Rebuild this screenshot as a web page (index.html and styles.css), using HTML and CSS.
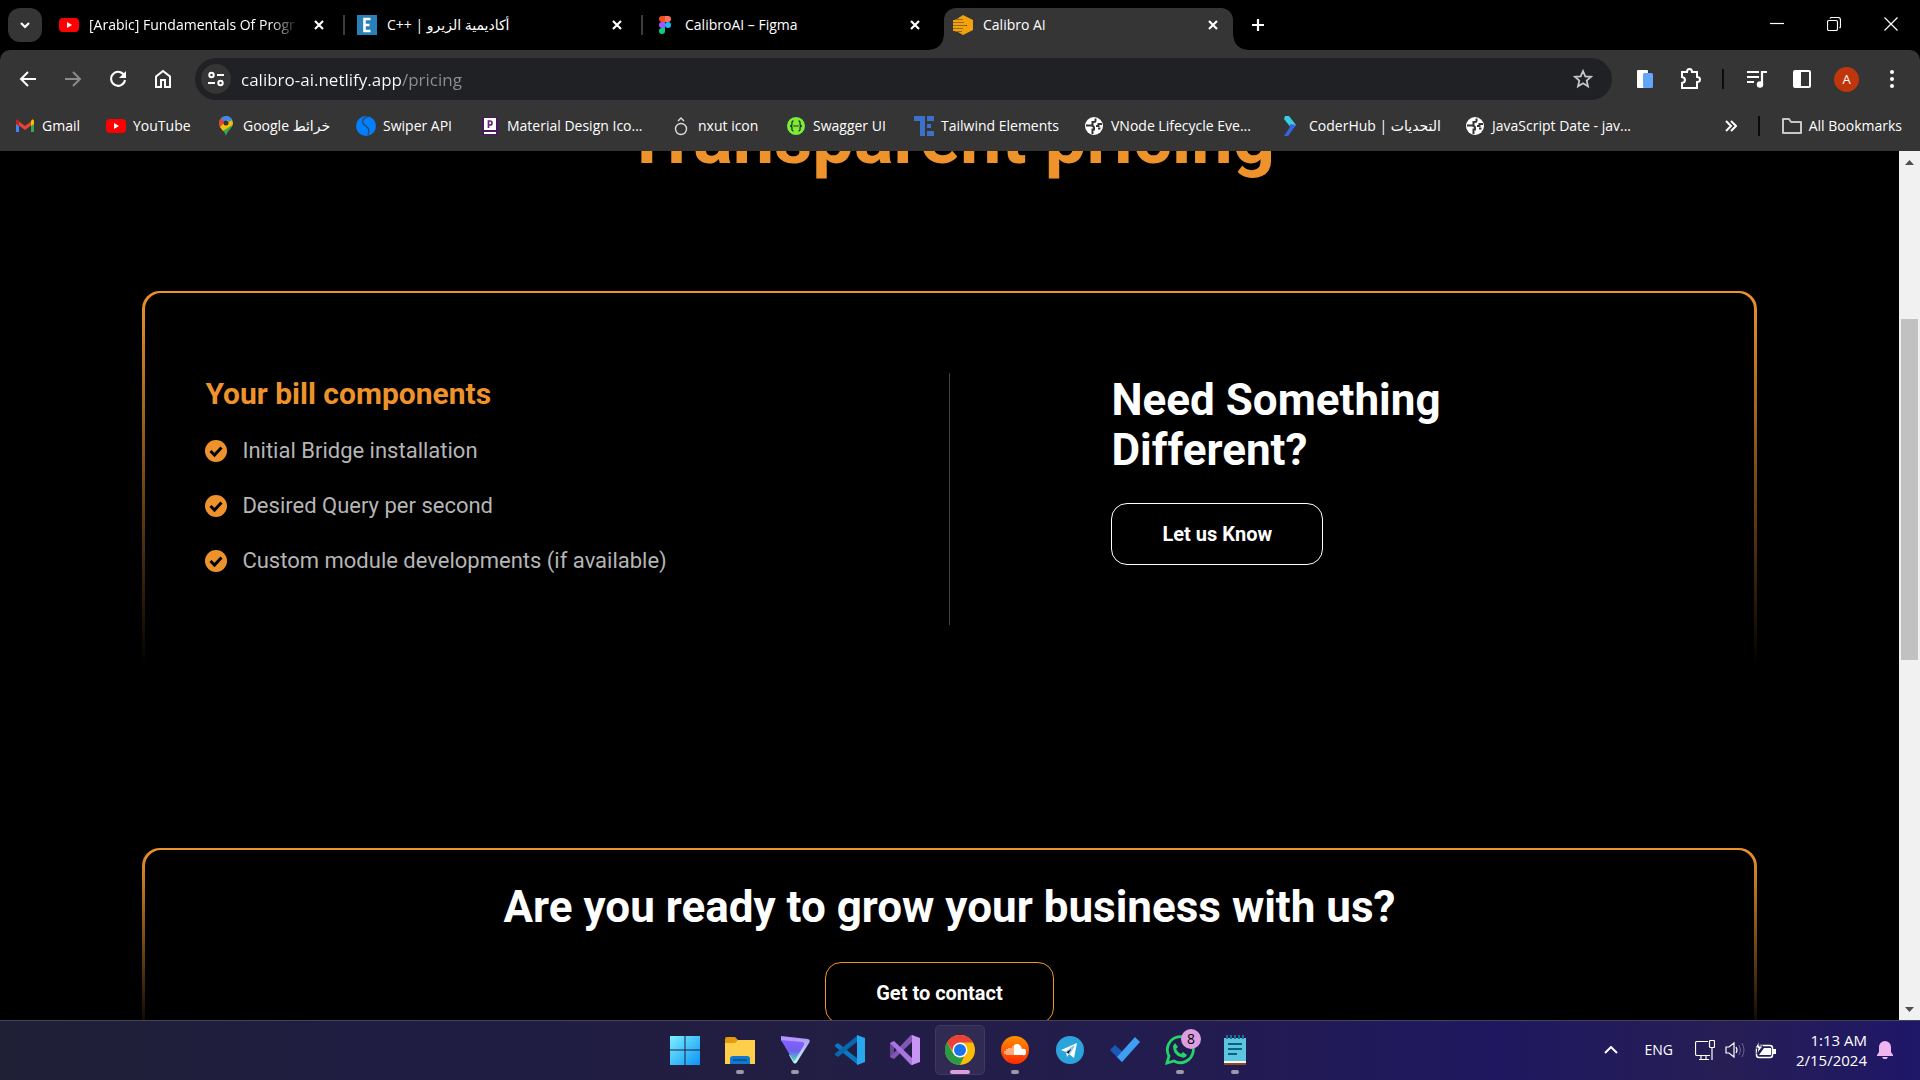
FILE: index.html
```html
<!DOCTYPE html>
<html lang="en">
<head>
<meta charset="utf-8">
<title>Calibro AI</title>
<link rel="stylesheet" href="styles.css">
</head>
<body>
<header class="browser">
  <nav class="tabstrip" aria-label="Tabs">
    <button class="tab-search" aria-label="Search tabs"><svg width="12" height="12" viewBox="0 0 12 12"><path class="line bold" d="M2 4l4 4 4-4"/></svg></button>
    <div class="tab">
      <svg class="favicon" viewBox="0 0 20 20"><rect y="3" width="20" height="14" rx="4" fill="#f00"/><path d="M8 7l5 3-5 3z" fill="#fff"/></svg>
      <span class="tab-title fade">[Arabic] Fundamentals Of Progr</span>
      <button class="tab-close" aria-label="Close tab"><svg width="10" height="10" viewBox="0 0 10 10"><path class="line bold" d="M1 1l8 8M9 1l-8 8"/></svg></button>
    </div>
    <div class="tab divided">
      <svg class="favicon" viewBox="0 0 20 20"><path fill="#2980b9" d="M0 0h20v20H0z"/><path d="M13.500 4H7.500v12h6M7.500 10h5" fill="none" stroke="#fff" stroke-width="2.600"/></svg>
      <span class="tab-title">C++ | أكاديمية الزيرو</span>
      <button class="tab-close" aria-label="Close tab"><svg width="10" height="10" viewBox="0 0 10 10"><path class="line bold" d="M1 1l8 8M9 1l-8 8"/></svg></button>
    </div>
    <div class="tab divided">
      <svg class="favicon" viewBox="0 0 20 20"><path fill="#f24e1e" d="M10 1v6H7a3 3 0 010-6z"/><path fill="#ff7262" d="M10 1h3a3 3 0 010 6h-3z"/><path fill="#a259ff" d="M10 7v6H7a3 3 0 010-6z"/><circle cx="13" cy="10" r="3" fill="#1abcfe"/><path fill="#0acf83" d="M7 13h3v3a3 3 0 11-3-3z"/></svg>
      <span class="tab-title">CalibroAI – Figma</span>
      <button class="tab-close" aria-label="Close tab"><svg width="10" height="10" viewBox="0 0 10 10"><path class="line bold" d="M1 1l8 8M9 1l-8 8"/></svg></button>
    </div>
    <div class="tab active">
      <svg class="favicon" viewBox="0 0 20 20"><path fill="#f2a20c" d="M10 0l10 5v10l-10 5-5-3h4v-1H0v-2h10v-1H0v-2h14v-1H0V8h9V7H0V5h8V4H4z"/><path d="M2 4.500h8M0 7.500h11M0 10.500h13M0 13.500h10M2 16.500h7" stroke="#9a6b14" stroke-width="1"/></svg>
      <span class="tab-title">Calibro AI</span>
      <button class="tab-close" aria-label="Close tab"><svg width="10" height="10" viewBox="0 0 10 10"><path class="line bold" d="M1 1l8 8M9 1l-8 8"/></svg></button>
    </div>
    <button class="new-tab" aria-label="New tab"><svg width="14" height="14" viewBox="0 0 14 14"><path class="line bold" d="M7 1v12M1 7h12"/></svg></button>
    <div class="window-controls">
      <button aria-label="Minimize"><svg width="14" height="14" viewBox="0 0 14 14"><path class="line thin" d="M0 6.500h14"/></svg></button>
      <button aria-label="Restore"><svg width="14" height="14" viewBox="0 0 14 14"><rect class="line thin" x=".5" y="3.500" width="10" height="10" rx="1.500"/><path class="line thin" d="M3 1.500Q3.500.5 4.500.5H11Q13.500.5 13.500 3v6.500q0 1-1 1.500"/></svg></button>
      <button aria-label="Close"><svg width="14" height="14" viewBox="0 0 14 14"><path class="line thin" d="M.5.5l13 13M13.500.5l-13 13"/></svg></button>
    </div>
  </nav>
  <div class="toolbar">
    <button class="tool" aria-label="Back"><svg width="18" height="18" viewBox="0 0 18 18"><path class="line" d="M17 9H2M9 2L2 9l7 7"/></svg></button>
    <button class="tool dim" aria-label="Forward"><svg width="18" height="18" viewBox="0 0 18 18"><path class="line" d="M1 9h15M9 2l7 7-7 7"/></svg></button>
    <button class="tool" aria-label="Reload"><svg width="18" height="18" viewBox="0 0 18 18"><path class="line" d="M15.500 6A7 7 0 1016 10"/><path d="M17 1v7h-7z" fill="#fff"/></svg></button>
    <button class="tool" aria-label="Home"><svg width="18" height="20" viewBox="0 0 18 20"><path class="line" d="M2 7.500L9 2l7 5.500V18h-5v-7H7v7H2z"/></svg></button>
    <div class="omnibox">
      <button class="site-info" aria-label="Site information"><svg width="18" height="16" viewBox="0 0 18 16"><circle class="line" cx="4.500" cy="4" r="2.200"/><path class="line" d="M10 4h7M1 12h7"/><circle class="line" cx="13.500" cy="12" r="2.200"/></svg></button>
      <input class="address" type="text" aria-label="Address" value="calibro-ai.netlify.app/pricing">
      <button class="star" aria-label="Bookmark this page"><svg width="20" height="20" viewBox="0 0 20 20"><path d="M10 2l2.300 5.300 5.700.5-4.300 3.800 1.300 5.700L10 14.300l-5 3 1.300-5.700L2 7.800l5.700-.5z" fill="none" stroke="#c7c7c7" stroke-width="1.800"/></svg></button>
    </div>
    <button class="tool" aria-label="Phone link"><svg width="20" height="20" viewBox="0 0 20 20"><rect x="2" y="1" width="11" height="18" rx="1" fill="#fff"/><rect x="8" y="4" width="10" height="15" rx="1.500" fill="#62a5fb"/></svg></button>
    <button class="tool" aria-label="Extensions"><svg width="24" height="24" viewBox="0 0 24 24"><path class="line" d="M4 5h5q0-3 2.500-3T14 5h5v5q3 0 3 2.500T19 15v6H4v-5q3-.5 3-3t-3-3z"/></svg></button>
    <span class="rule"></span>
    <button class="tool" aria-label="Media"><svg width="22" height="20" viewBox="0 0 22 20"><path class="line bold" d="M1 3h12M1 8h12M1 13h7M16 16V3h5"/><circle cx="14" cy="15.500" r="3.200" fill="#fff"/></svg></button>
    <button class="tool" aria-label="Side panel"><svg width="18" height="20" viewBox="0 0 18 20"><rect class="line" x="1" y="2" width="16" height="16" rx="1"/><path fill="#fff" d="M1 2h7v16H1z"/></svg></button>
    <button class="tool" aria-label="Profile"><span class="avatar">A</span></button>
    <button class="tool" aria-label="Menu"><svg width="6" height="20" viewBox="0 0 6 20"><g fill="#fff"><circle cx="3" cy="3" r="2"/><circle cx="3" cy="10" r="2"/><circle cx="3" cy="17" r="2"/></g></svg></button>
  </div>
  <nav class="bookmarks" aria-label="Bookmarks">
    <div class="bookmark-list">
      <a href="#"><svg viewBox="0 0 20 20"><path d="M1 5v11h3V8z" fill="#4285f4"/><path d="M16 8v8h3V5z" fill="#34a853"/><path d="M2 4l8 6 8-6v4l-8 6-8-6z" fill="#ea4335"/><path d="M1 5q0-2 2-1.500L4 5v5L1 8z" fill="#c5221f"/><path d="M19 5q0-2-2-1.500L16 5v5l3-2z" fill="#fbbc04"/></svg>Gmail</a>
      <a href="#"><svg viewBox="0 0 20 20"><rect y="3" width="20" height="14" rx="4" fill="#f00"/><path d="M8 7l5 3-5 3z" fill="#fff"/></svg>YouTube</a>
      <a href="#"><svg viewBox="0 0 20 20"><path d="M10 20c-1-5-7-8-7-13a7 7 0 0114 0c0 5-6 8-7 13z" fill="#34a853"/><path d="M5 2.500A7 7 0 0116.500 5L10 8z" fill="#4285f4"/><path d="M5 2.500L9 6l-5 5Q1.500 6 5 2.500z" fill="#ea4335"/><path d="M4 11l9-9q5 3 3.500 7L7 15z" fill="#fbbc04"/><path d="M10 0a7 7 0 016 4l-3 2-4-5z" fill="#4285f4"/><circle cx="10" cy="7" r="2.500" fill="#333"/></svg>Google خرائط</a>
      <a href="#"><svg viewBox="0 0 20 20"><circle cx="10" cy="10" r="10" fill="#0080ff"/><path d="M14 0Q5 2 7 7q1 2 4 4t1 8" fill="none" stroke="#2b4a6d" stroke-width="1.500"/></svg>Swiper API</a>
      <a href="#"><svg viewBox="0 0 20 20"><rect x="2" y="1" width="16" height="18" rx="2" fill="#4b1664"/><path fill="#fff" d="M4 2h12v12H4zM4 16h12v2H4z"/><path d="M8.500 12V5H10a2 2 0 010 4H8.500" fill="none" stroke="#68217a" stroke-width="1.700"/></svg>Material Design Ico...</a>
      <a href="#"><svg viewBox="0 0 20 20"><circle cx="10" cy="13" r="5.500" fill="none" stroke="#ddd" stroke-width="1.400"/><path d="M7 5l3-3 3 3" fill="none" stroke="#ddd" stroke-width="1.400"/></svg>nxut icon</a>
      <a href="#"><svg viewBox="0 0 20 20"><circle cx="10" cy="10" r="9.500" fill="#85ea2d" stroke="#173647"/><path d="M7.500 5Q5.500 5 6 8q0 2-2 2 2 0 2 2-.5 3 1.500 3M12.500 5q2 0 1.500 3 0 2 2 2-2 0-2 2 .5 3-1.500 3" fill="none" stroke="#173647" stroke-width="1.300"/><path d="M7.500 10h5" stroke="#173647" stroke-width="1.300" stroke-dasharray="1.300 .6"/></svg>Swagger UI</a>
      <a href="#"><svg viewBox="0 0 20 20"><path fill="#3b71ca" d="M0 0h11v20H6V5H0zM13 0h7v5h-7zM13 8h4v4h-4zM13 15h7v5h-7z"/></svg>Tailwind Elements</a>
      <a href="#"><svg viewBox="0 0 20 20"><circle cx="10" cy="10" r="9" fill="#fff"/><path d="M2 9.500h5q3 0 3 2.500v1.500H8.500V18M11.500 2.500v2q0 1.500-1.500 1.500H8.500v3.500M18 8h-3.500v2H12M14 12.500h2.500" fill="none" stroke="#353535" stroke-width="2"/></svg>VNode Lifecycle Eve...</a>
      <a href="#"><svg viewBox="0 0 20 20"><path d="M3 0h4l7 9-4 4-8-10z" fill="#37cfe0"/><path d="M8 8l6 1-8 11H2l6-9z" fill="#3466e3"/></svg>CoderHub | التحديات</a>
      <a href="#"><svg viewBox="0 0 20 20"><circle cx="10" cy="10" r="9" fill="#fff"/><path d="M2 9.500h5q3 0 3 2.500v1.500H8.500V18M11.500 2.500v2q0 1.500-1.500 1.500H8.500v3.500M18 8h-3.500v2H12M14 12.500h2.500" fill="none" stroke="#353535" stroke-width="2"/></svg>JavaScript Date - jav...</a>
    </div>
    <button class="more" aria-label="More bookmarks"><svg width="12" height="12" viewBox="0 0 12 12"><path class="line" d="M1 1l5 5-5 5M6 1l5 5-5 5"/></svg></button>
    <span class="rule"></span>
    <a class="all" href="#"><svg viewBox="0 0 20 20"><path d="M1 3h6l2 3h10v11H1z" fill="none" stroke="#c7c7c7" stroke-width="2" stroke-linejoin="round"/></svg>All Bookmarks</a>
  </nav>
</header>

<div class="viewport">
  <main class="page">
    <h1 class="title">Transparent pricing</h1>
    <section class="card pricing">
      <div class="card-body columns">
        <div class="bill">
          <h2 class="bill-title">Your bill components</h2>
          <ul class="features">
            <li><svg width="22" height="22" viewBox="0 0 22 22"><circle cx="11" cy="11" r="11" fill="#ee922c"/><path d="M5.500 11l4 4 7-7.500" fill="none" stroke="#000" stroke-width="3"/></svg>Initial Bridge installation</li>
            <li><svg width="22" height="22" viewBox="0 0 22 22"><circle cx="11" cy="11" r="11" fill="#ee922c"/><path d="M5.500 11l4 4 7-7.500" fill="none" stroke="#000" stroke-width="3"/></svg>Desired Query per second</li>
            <li><svg width="22" height="22" viewBox="0 0 22 22"><circle cx="11" cy="11" r="11" fill="#ee922c"/><path d="M5.500 11l4 4 7-7.500" fill="none" stroke="#000" stroke-width="3"/></svg>Custom module developments (if available)</li>
          </ul>
        </div>
        <div class="custom">
          <h2 class="heading">Need Something<br>Different?</h2>
          <button class="cta">Let us Know</button>
        </div>
      </div>
    </section>
    <section class="card contact">
      <div class="card-body centered">
        <h2 class="heading">Are you ready to grow your business with us?</h2>
        <button class="cta accent">Get to contact</button>
      </div>
    </section>
  </main>
  <div class="scrollbar" aria-hidden="true">
    <svg width="21" height="21" viewBox="0 0 21 21"><path d="M6 14l4.500-5 4.500 5z" fill="#505050"/></svg>
    <div class="track"><div class="thumb"></div></div>
    <svg width="21" height="21" viewBox="0 0 21 21"><path d="M6 8l4.500 5L15 8z" fill="#505050"/></svg>
  </div>
</div>

<footer class="taskbar">
  <div class="apps">
    <button class="app" aria-label="Start"><svg viewBox="0 0 30 30"><defs><linearGradient id="win" x2="1" y2="1"><stop stop-color="#7df0ff"/><stop offset="1" stop-color="#0a93f5"/></linearGradient></defs><path fill="url(#win)" d="M0 1h14.500v13.500H0zM15.500 1H30v13.500H15.500zM0 15.500h14.500V30H0zM15.500 15.500H30V30H15.500z"/></svg></button>
    <button class="app open" aria-label="File Explorer"><svg viewBox="0 0 30 30"><path fill="#e19b0c" d="M0 4q0-2 2-2h8l3 3v5H0z"/><path fill="#ffcf4b" d="M0 8h10l3-3h17v24H0z"/><path fill="#1178d0" d="M5 29v-5q0-3 3-3h14q3 0 3 3v5z"/><path stroke="#0a4a8a" stroke-width="1.500" d="M8 25h14"/></svg></button>
    <button class="app open" aria-label="Proton VPN"><svg viewBox="0 0 30 30"><defs><linearGradient id="vpn" x2="0" y2="1"><stop stop-color="#8a60ff"/><stop offset=".5" stop-color="#6f60f0"/><stop offset="1" stop-color="#4be8c0"/></linearGradient><linearGradient id="vpn2" x2="0" y2="1"><stop stop-color="#b18cff"/><stop offset="1" stop-color="#c7fbf0"/></linearGradient></defs><path fill="url(#vpn2)" d="M1 1l27 3q3 1 1 4L17 27q-2 3-4 0L9 20 24 9 1 6z"/><path fill="url(#vpn)" d="M1 5l22 2q2 1 1 3L14 27z"/></svg></button>
    <button class="app" aria-label="Visual Studio Code"><svg viewBox="0 0 30 30"><path fill="#0879c0" d="M0 10l3-2 20 16v6L0 11.500z"/><path fill="#0a67ae" d="M0 20l3 2L23 6V0L0 18.500z"/><path fill="#28a7ee" d="M22 0l8 3v24l-8 3z"/></svg></button>
    <button class="app" aria-label="Visual Studio"><svg viewBox="0 0 30 30"><path fill="#68489b" d="M0 8l4-2v18l-4-2z"/><path fill="#8355b5" d="M0 22l4 2L23 6V0h-2z"/><path fill="#a874dd" d="M0 8l4-2 19 18v6h-2z"/><path fill="#c894f6" d="M22 0l8 3v24l-8 3z"/></svg></button>
    <button class="app open current" aria-label="Google Chrome"><svg viewBox="0 0 30 30"><circle cx="15" cy="15" r="15" fill="#fbbc05"/><path fill="#ea4335" d="M2 7.500A15 15 0 0128 7.500H15L9 18z"/><path fill="#2b9a48" d="M2 7.500L8.500 19l6.500 3.500 4-1L15 30A15 15 0 012 7.500z"/><circle cx="15" cy="15" r="7.500" fill="#fff"/><circle cx="15" cy="15" r="6" fill="#1a73e8"/></svg></button>
    <button class="app open" aria-label="SoundCloud"><svg viewBox="0 0 30 30"><defs><linearGradient id="sc" x2="0" y2="1"><stop stop-color="#ff9000"/><stop offset="1" stop-color="#ff2a00"/></linearGradient></defs><circle cx="15" cy="15" r="14" fill="url(#sc)"/><path fill="#fff" d="M14 10q6-3 8 4 4-1 4 3t-3 3h-9z"/><path stroke="#ffd9c4" d="M5 16v3M7 14v6M9 13v7M11 13v7M13 11v9" stroke-width="1.300"/></svg></button>
    <button class="app" aria-label="Telegram"><svg viewBox="0 0 30 30"><circle cx="15" cy="15" r="14" fill="#2ba4dc"/><path fill="#fff" d="M6 15l16-7-3 15-5-4-2 3-1-5z"/><path stroke="#93c6e2" stroke-width="1.500" d="M11 17l8-6-5 8"/></svg></button>
    <button class="app" aria-label="To Do"><svg viewBox="0 0 30 30"><path fill="#1859b9" d="M0 15l5-5 12 11-5 6z"/><path fill="#3e9ff2" d="M7 22L25 2l5 5-18 20z"/></svg></button>
    <button class="app open" aria-label="WhatsApp"><svg viewBox="0 0 30 30"><path fill="none" stroke="#25d366" stroke-width="2.800" d="M2 28l2-7A13 13 0 119 26z"/><path fill="#25d366" d="M10 8l3 4-2 2q2 4 5 5l2-2 4 3q-2 4-6 2-8-2-8-11z"/></svg><span class="badge">8</span></button>
    <button class="app open" aria-label="Notepad"><svg viewBox="0 0 30 30"><path fill="#8c4b18" d="M4 26h22v4H4z"/><path fill="#f4f4f4" d="M4 25h22v3H4z"/><path fill="#5cc6e0" d="M4 3h22v23H4z"/><path stroke="#0c607f" stroke-width="2" d="M8 9h14M8 14h14M8 19h9"/><path stroke="#17718f" stroke-width="2" d="M7 0v4M11 0v4M15 0v4M19 0v4M23 0v4"/></svg></button>
  </div>
  <div class="tray">
    <button aria-label="Show hidden icons"><svg width="14" height="8" viewBox="0 0 14 8"><path class="line" d="M1 7l6-6 6 6"/></svg></button>
    <span class="lang">ENG</span>
    <svg width="20" height="20" viewBox="0 0 20 20"><path class="line thin" d="M13 1.500H2Q.5 1.500.5 3v11q0 1.500 1.500 1.500h13M6 16v3M11 16v3M4 19.500h10M17 7v13"/><rect class="line thin" x="14.500" y=".5" width="5" height="7" rx="1"/></svg>
    <svg width="20" height="20" viewBox="0 0 20 20"><path class="line thin" d="M1 7h3l5-4v14l-5-4H1zM11 7q2 3 0 6"/><path d="M14 5q3 5 0 10M17 3q4 7 0 14" fill="none" stroke="#6b659b"/></svg>
    <svg width="21" height="18" viewBox="0 0 21 18"><rect x="1.500" y="4.500" width="16" height="12" rx="2.500" fill="none" stroke="#fff" stroke-width="1.500"/><path fill="#fff" d="M4 14l5-7h7v7zM18 8h3v5h-3z"/><path fill="#fff" stroke="#231d52" d="M4 0L0 7h3l-1 6 6-8H4z"/></svg>
    <div class="clock"><time>1:13 AM</time><time>2/15/2024</time></div>
    <svg width="16" height="20" viewBox="0 0 16 20"><path fill="#f0b4f0" d="M0 15l2-3V7a6 6 0 0112 0v5l2 3v1H0zM5 17h6l-1.500 2h-3z"/></svg>
  </div>
</footer>
</body>
</html>
```
FILE: styles.css
```css
* { box-sizing: border-box; margin: 0; }

body {
  display: flex;
  flex-direction: column;
  height: 100vh;
  overflow: hidden;
  background: #000;
  color: #fff;
  font: 14px/20px "Open Sans", "Noto Sans", "DejaVu Sans", sans-serif;
}

button {
  display: flex;
  align-items: center;
  justify-content: center;
  padding: 0;
  border: 0;
  background: none;
  color: inherit;
  font: inherit;
}

a { color: inherit; text-decoration: none; }
svg { flex: none; }

.line { fill: none; stroke: #fff; stroke-width: 2; }
.line.bold { stroke-width: 2.2; }
.line.thin { stroke-width: 1.2; }

/* Tab strip */
.tabstrip { display: flex; height: 50px; padding-left: 8px; }
.tab-search {
  width: 34px;
  height: 34px;
  margin: 8px 8px 0 0;
  border-radius: 12px;
  background: #353535;
}
.tab {
  position: relative;
  display: flex;
  align-items: center;
  gap: 10px;
  width: 289px;
  height: 42px;
  margin: 8px 9px 0 0;
  padding: 0 15px 8px 9px;
}
.tab.divided::before {
  content: "";
  position: absolute;
  left: -5px;
  top: 7px;
  width: 2px;
  height: 20px;
  background: #3c3c3c;
}
.tab.active { border-radius: 12px 12px 0 0; background: #353535; }
.tab.active::before,
.tab.active::after {
  content: "";
  position: absolute;
  bottom: 0;
  width: 14px;
  height: 14px;
}
.tab.active::before { right: 100%; background: radial-gradient(circle at 0 0, transparent 13px, #353535 14px); }
.tab.active::after { left: 100%; background: radial-gradient(circle at 100% 0, transparent 13px, #353535 14px); }
.favicon { width: 20px; height: 20px; }
.tab-title { flex: 1; overflow: hidden; white-space: nowrap; }
.tab-title.fade { mask-image: linear-gradient(90deg, #000 180px, transparent 210px); }
.new-tab { width: 34px; height: 34px; margin: 8px 0 0 -1px; }
.window-controls { display: flex; margin-left: auto; padding-right: 1px; }
.window-controls button { width: 57px; height: 48px; }

/* Toolbar */
.toolbar {
  display: flex;
  align-items: center;
  height: 58px;
  padding: 0 6px 0 5px;
  border-radius: 10px 10px 0 0;
  background: #353535;
}
.tool { width: 45px; height: 42px; }
.tool.dim .line { stroke: #8b8b8b; }
.omnibox {
  display: flex;
  flex: 1;
  align-items: center;
  height: 42px;
  margin: 0 10px;
  padding: 0 19px 0 6px;
  border-radius: 21px;
  background: #202124;
}
.site-info { width: 30px; height: 30px; border-radius: 50%; background: #353535; }
.address {
  flex: 1;
  height: 30px;
  padding: 0 0 0 10px;
  border: 0;
  outline: 0;
  font: 17px/24px "Open Sans", "Noto Sans", sans-serif;
  color: transparent;
  background: linear-gradient(90deg, #fff 171px, #8f8f8f 171px);
  background-clip: text;
}
.rule { width: 2px; height: 20px; margin: 0 10px; background: #0a0a0a; }
.avatar {
  width: 25px;
  height: 25px;
  border-radius: 50%;
  background: #bf360c;
  font-size: 13px;
  line-height: 25px;
}

/* Bookmarks */
.bookmarks {
  display: flex;
  align-items: center;
  height: 43px;
  padding: 0 18px 8px 15px;
  background: #353535;
}
.bookmarks a { display: flex; align-items: center; gap: 7px; white-space: nowrap; }
.bookmarks a svg { width: 20px; height: 20px; }
.bookmark-list {
  display: grid;
  flex: 1;
  grid-template-columns: 91px 110px 140px 124px 191px 115px 128px 170px 198px 183px auto;
}
.more { width: 34px; height: 34px; }
.bookmarks .all { margin-left: 12px; }

/* Web page */
.viewport { display: flex; flex: 1; min-height: 0; }
.page {
  flex: 1;
  overflow: hidden;
  background: #000;
  font-family: Roboto, "Open Sans", sans-serif;
}
.title {
  margin: -53px 0 113px;
  color: #ee922c;
  font-size: 74px;
  line-height: 80px;
  text-align: center;
}
.card {
  width: 85%;
  margin: 0 auto;
  padding: 2px 3px 0;
  border-radius: 18px 18px 0 0;
  background: linear-gradient(#ee922c, #000);
}
.card + .card { margin-top: 182px; }
.card-body { border-radius: 16px 16px 0 0; background: #000; }
.columns {
  display: grid;
  grid-template-columns: 1fr 1fr;
  padding: 80px 0 41px;
}
.bill { min-height: 252px; padding-left: 60px; }
.bill-title { color: #ee922c; font-size: 30px; line-height: 42px; }
.features {
  display: flex;
  flex-direction: column;
  gap: 27px;
  margin-top: 22px;
  padding: 0;
  list-style: none;
  color: #b5b5b5;
  font-size: 22px;
  line-height: 28px;
}
.features li { display: flex; align-items: center; gap: 15px; }
.custom { padding: 2px 0 0 161px; border-left: 1px solid #444; }
.heading { font-size: 44px; line-height: 50px; }
.cta {
  height: 62px;
  margin-top: 28px;
  padding: 0 50px;
  border: 1px solid #fff;
  border-radius: 16px;
  font-size: 20px;
  font-weight: 700;
}
.centered {
  display: flex;
  flex-direction: column;
  align-items: center;
  padding: 32px 0 10px;
}
.accent { margin: 30px 20px 0 0; border-color: #ee922c; }

.scrollbar { display: flex; flex-direction: column; width: 21px; background: #f1f1f1; }
.scrollbar svg { display: block; }
.track { flex: 1; padding: 147px 2px 0; }
.thumb { height: 341px; background: #c1c1c1; }

/* Taskbar */
.taskbar {
  display: grid;
  grid-template-columns: 1fr auto 1fr;
  align-items: center;
  height: 60px;
  padding-bottom: 1px;
  border-top: 1px solid #45425c;
  background: linear-gradient(90deg, #1f2036, #1f1d42 20%, #221e42 40%, #231c50 62%, #1f1860 78%, #261e54 90%, #1f1768);
}
.apps { display: flex; grid-column: 2; gap: 5px; }
.app { position: relative; width: 50px; height: 50px; border: 1px solid transparent; border-radius: 5px; }
.app svg { width: 30px; height: 30px; }
.app.open::after {
  content: "";
  position: absolute;
  bottom: 0;
  width: 8px;
  height: 4px;
  border-radius: 2px;
  background: #9c98ab;
}
.app.current { border-color: #3f3860; background: #312a52; }
.app.current::after { width: 20px; background: #dc9ee0; }
.badge {
  position: absolute;
  top: 3px;
  right: 3px;
  width: 20px;
  height: 20px;
  border-radius: 50%;
  background: #dc9ee0;
  color: #000;
  line-height: 20px;
}
.tray {
  display: flex;
  align-items: center;
  justify-self: end;
  gap: 10px;
  padding-right: 27px;
}
.lang { margin: 0 12px 0 16px; }
.clock { display: flex; flex-direction: column; margin-left: 10px; font-size: 15px; text-align: right; }
```
